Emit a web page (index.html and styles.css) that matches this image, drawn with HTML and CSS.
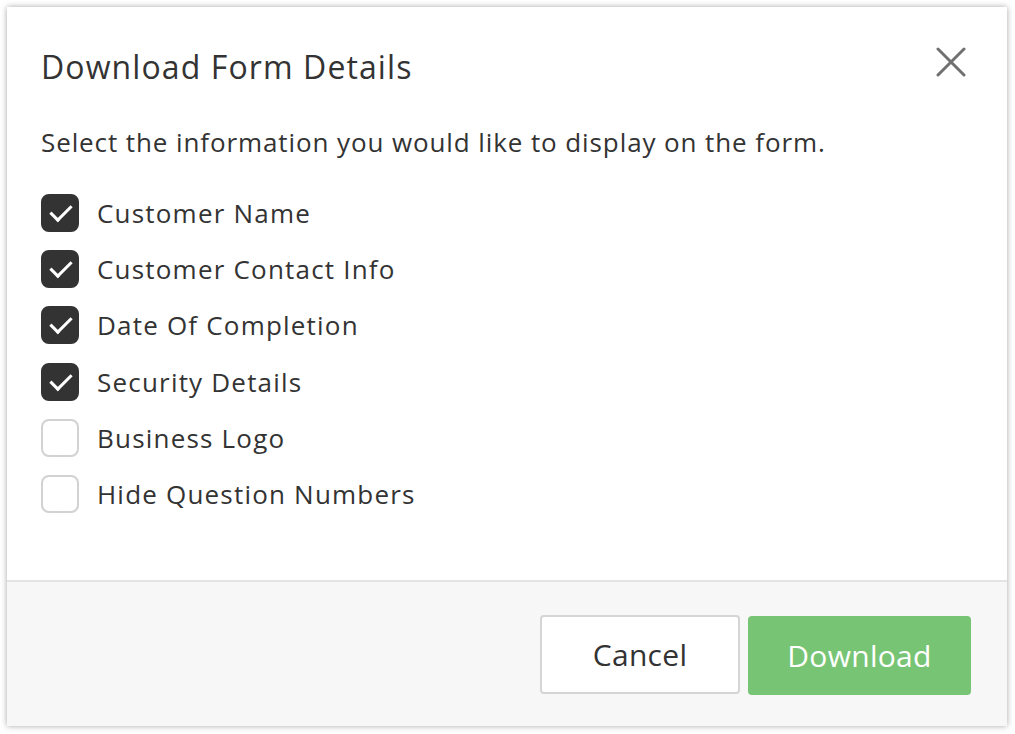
FILE: index.html
```html
<!DOCTYPE html>
<html lang="en">
<head>
    <meta charset="UTF-8">
    <meta name="viewport" content="width=device-width, initial-scale=1.0">
    <title>Download Form Details</title>
    <link rel="stylesheet" href="styles.css">
</head>
<body>
    <div class="dialog">
        <div class="dialog-body">
            <div class="dialog-header">
                <h2>Download Form Details</h2>
                <button class="close" aria-label="Close">
                    <svg width="30" height="30" viewBox="0 0 30 30">
                        <path d="M2 2 L28 28 M28 2 L2 28" stroke="#707070" stroke-width="3" stroke-linecap="round"/>
                    </svg>
                </button>
            </div>
            <p class="intro">Select the information you would like to display on the form.</p>

            <!-- Opciones -->
            <ul class="options">
                <li><span class="box checked"></span>Customer Name</li>
                <li><span class="box checked"></span>Customer Contact Info</li>
                <li><span class="box checked"></span>Date Of Completion</li>
                <li><span class="box checked"></span>Security Details</li>
                <li><span class="box"></span>Business Logo</li>
                <li><span class="box"></span>Hide Question Numbers</li>
            </ul>
        </div>
        <div class="dialog-footer">
            <button class="btn btn-cancel">Cancel</button>
            <button class="btn btn-primary">Download</button>
        </div>
    </div>
</body>
</html>
```

FILE: styles.css
```css
body {
    margin: 0;
    padding: 7px;
    background: #fff;
    font-family: "Open Sans", Lato, sans-serif;
    color: #333;
}

.dialog {
    width: 1000px;
    height: 719px;
    display: flex;
    flex-direction: column;
    background: #fff;
    box-shadow: 0 0 6px rgba(0, 0, 0, 0.35);
}

.dialog-body {
    flex: 1;
    padding: 0 34px;
}

.dialog-header {
    display: flex;
    justify-content: space-between;
    align-items: center;
    height: 118px;
}

.dialog-header h2 {
    margin: 0;
    font-size: 32px;
    font-weight: 400;
    letter-spacing: 1.1px;
    color: #333;
}

.close {
    background: none;
    border: none;
    padding: 0;
    margin-right: 7px;
    margin-top: -8px;
    cursor: pointer;
    display: flex;
}

.intro {
    margin: 1px 0 27px;
    font-size: 26px;
    letter-spacing: 0.9px;
    line-height: 32px;
}

.options {
    list-style: none;
    margin: 0;
    padding: 0;
}

.options li {
    display: flex;
    align-items: center;
    gap: 18px;
    height: 56.2px;
    font-size: 26px;
    letter-spacing: 1.2px;
}

.box {
    width: 34px;
    height: 34px;
    border: 2px solid #d2d2d2;
    border-radius: 8px;
    flex-shrink: 0;
}

.box.checked {
    background: #333;
    border-color: #333;
    position: relative;
}

.box.checked::after {
    content: "";
    position: absolute;
    left: 12px;
    top: 4px;
    width: 9px;
    height: 18px;
    border-right: 3px solid #fff;
    border-bottom: 3px solid #fff;
    transform: rotate(45deg);
}

.dialog-footer {
    height: 144px;
    border-top: 2px solid #e4e4e4;
    background: #f7f7f7;
    display: flex;
    justify-content: flex-end;
    align-items: center;
    gap: 8px;
    padding-right: 36px;
}

.btn {
    height: 79px;
    font-family: inherit;
    font-size: 30px;
    letter-spacing: 0.3px;
    border-radius: 4px;
    cursor: pointer;
}

.btn-cancel {
    width: 200px;
    background: #fff;
    border: 2px solid #d5d5d5;
    color: #333;
}

.btn-primary {
    width: 223px;
    background: #78c475;
    border: none;
    color: #fff;
    margin-top: 2px;
}
```
